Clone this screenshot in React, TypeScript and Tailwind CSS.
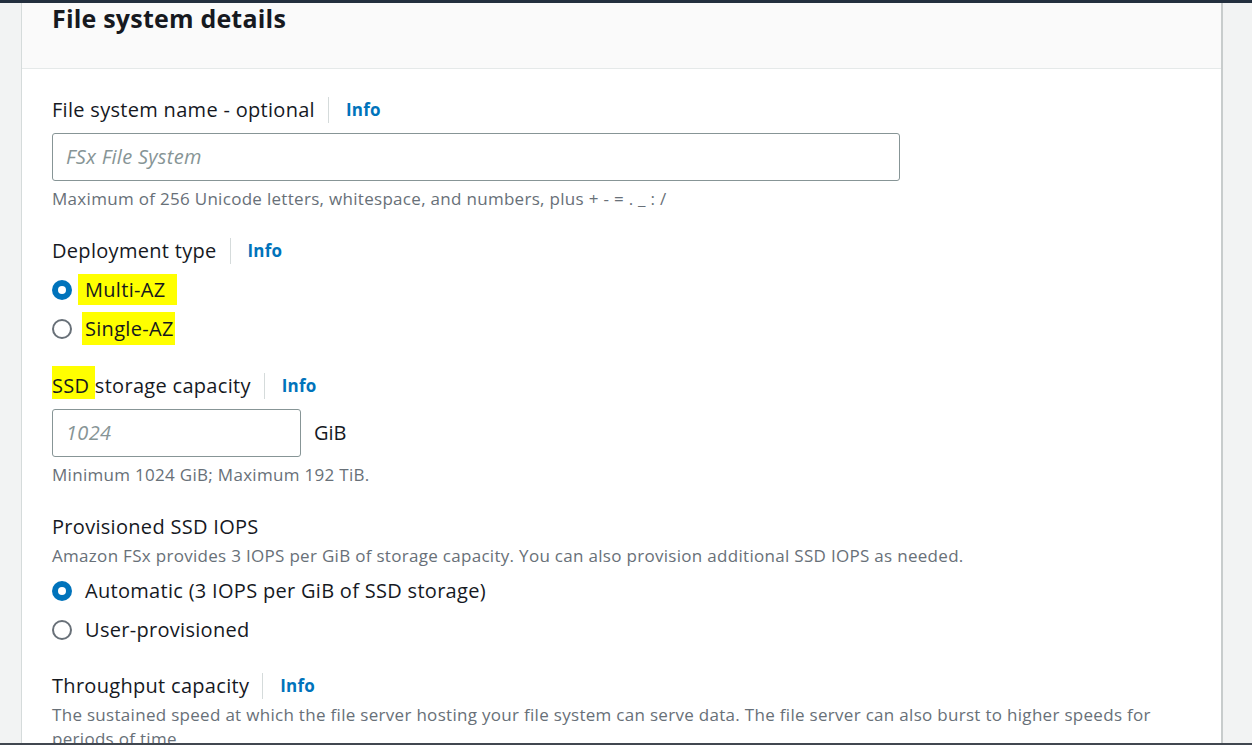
import React, { useState } from 'react';

const font = { fontFamily: '"Open Sans", "Noto Sans", Arial, sans-serif' };

const Info = () => (
  <>
    <span className="ml-[13px] mr-[17px] h-[26px] w-px bg-[#d5dbdb]" />
    <span className="text-[17px] font-bold tracking-[0.2px] text-[#0073bb]">Info</span>
  </>
);

const Radio: React.FC<{ checked: boolean; onClick: () => void; children: React.ReactNode }> = ({ checked, onClick, children }) => (
  <div className="flex h-[39px] items-center cursor-pointer" onClick={onClick}>
    {checked ? (
      <span className="flex h-[20px] w-[20px] items-center justify-center rounded-full bg-[#0073bb]">
        <span className="h-[8px] w-[8px] rounded-full bg-white" />
      </span>
    ) : (
      <span className="h-[20px] w-[20px] rounded-full border-2 border-[#687078] bg-white" />
    )}
    <span className="ml-[13px] text-[20px] tracking-[0.3px] text-[#16191f]">{children}</span>
  </div>
);

const label = 'flex h-[34px] items-center text-[20px] tracking-[0.3px] text-[#16191f]';
const hint = 'text-[17px] leading-[24px] tracking-[0.3px] text-[#687078]';

const App: React.FC = () => {
  const [deploy, setDeploy] = useState('multi');
  const [iops, setIops] = useState('auto');

  return (
    <div className="flex h-screen flex-col overflow-hidden bg-[#f2f3f3]" style={font}>
      <div className="h-[3px] bg-[#232f3e]" />
      <div className="flex flex-1 overflow-hidden">
        <div className="w-[22px] shrink-0 border-r border-[#d5dbdb]" />
        <section className="flex w-[1201px] shrink-0 flex-col border-r-2 border-[#c8cccc] bg-white">
          {/* panel header */}
          <div className="h-[66px] shrink-0 border-b border-[#e5e9e9] bg-[#fafafa] px-[30px]">
            <h2 className="-mt-[3px] text-[25px] font-bold leading-[36px] tracking-[0.2px] text-[#16191f]">File system details</h2>
          </div>

          <div className="px-[30px] pt-[24px]">
            {/* name */}
            <div className={label}>
              <span>File system name - optional</span>
              <Info />
            </div>
            <div className="mt-[6px] flex h-[48px] w-[848px] items-center rounded-[3px] border border-[#879596] px-[13px]">
              <span className="text-[20px] italic tracking-[0.3px] text-[#879596]">FSx File System</span>
            </div>
            <p className={`mt-[6px] ${hint}`}>
              Maximum of 256 Unicode letters, whitespace, and numbers, plus + - = . _ : /
            </p>

            {/* deployment */}
            <div className={`mt-[23px] ${label}`}>
              <span>Deployment type</span>
              <Info />
            </div>
            <div className="mt-[2px]">
              <Radio checked={deploy === 'multi'} onClick={() => setDeploy('multi')}>
                <span className="-ml-[7px] bg-[#ffff00] py-[2px] pl-[7px] pr-[12px]">Multi-AZ</span>
              </Radio>
              <Radio checked={deploy === 'single'} onClick={() => setDeploy('single')}>
                <span className="-ml-[3px] bg-[#ffff00] py-[3px] pl-[3px] pr-[1px]">Single-AZ</span>
              </Radio>
            </div>

            {/* storage */}
            <div className={`mt-[21px] ${label}`}>
              <span>
                <span className="bg-[#ffff00] pt-[6px]">SSD </span>storage capacity
              </span>
              <Info />
            </div>
            <div className="mt-[6px] flex h-[48px] items-center">
              <div className="flex h-[48px] w-[249px] items-center rounded-[3px] border border-[#879596] px-[13px]">
                <span className="text-[20px] italic tracking-[0.3px] text-[#879596]">1024</span>
              </div>
              <span className="ml-[13px] text-[20px] text-[#16191f]">GiB</span>
            </div>
            <p className={`mt-[6px] ${hint}`}>Minimum 1024 GiB; Maximum 192 TiB.</p>

            {/* iops */}
            <div className={`mt-[23px] ${label}`}>
              <span>Provisioned SSD IOPS</span>
            </div>
            <p className={hint}>
              Amazon FSx provides 3 IOPS per GiB of storage capacity. You can also provision additional SSD IOPS as needed.
            </p>
            <div className="mt-[3px]">
              <Radio checked={iops === 'auto'} onClick={() => setIops('auto')}>
                Automatic (3 IOPS per GiB of SSD storage)
              </Radio>
              <Radio checked={iops === 'user'} onClick={() => setIops('user')}>
                User-provisioned
              </Radio>
            </div>

            {/* throughput */}
            <div className={`mt-[20px] ${label}`}>
              <span>Throughput capacity</span>
              <Info />
            </div>
            <p className={`w-[1110px] ${hint}`}>
              The sustained speed at which the file server hosting your file system can serve data. The file server can also burst to higher speeds for periods of time.
            </p>
          </div>
        </section>
        <div className="flex-1" />
      </div>
      <div className="h-[2px] bg-[#414750]" />
    </div>
  );
};

export default App;
